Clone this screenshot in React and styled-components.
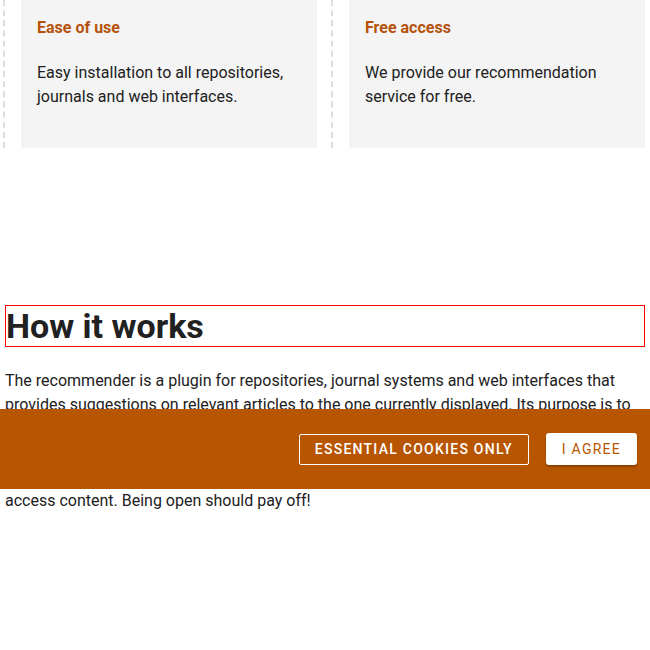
import React from "react";
import styled, { createGlobalStyle } from "styled-components";

const GlobalStyle = createGlobalStyle`
  html, body {
    margin: 0;
    padding: 0;
    background: #ffffff;
    overflow: hidden;
  }
  body {
    font-family: Roboto, "Noto Sans", sans-serif;
    color: #212121;
  }
`;

const features = [
  {
    title: "Ease of use",
    text: "Easy installation to all repositories, journals and web interfaces.",
  },
  {
    title: "Free access",
    text: "We provide our recommendation service for free.",
  },
];

const App = () => {
  return (
    <Page>
      <GlobalStyle />
      <FeatureRow>
        {features.map((f) => (
          <FeatureColumn key={f.title}>
            <Card>
              <CardTitle>{f.title}</CardTitle>
              <CardText>{f.text}</CardText>
            </Card>
          </FeatureColumn>
        ))}
      </FeatureRow>

      <Section>
        <Heading>How it works</Heading>
        <Paragraph>
          The recommender is a plugin for repositories, journal systems and web
          interfaces that provides suggestions on relevant articles to the one
          currently displayed. Its purpose is to support users in discovering
          articles of interest from across the network of open access
          repositories. It is intended to be particularly useful for enabling
          the discoverability of research outputs, and to reward institutions
          that make their work freely available as open access content. Being
          open should pay off!
        </Paragraph>
      </Section>

      <CookieBanner>
        <OutlineButton>Essential cookies only</OutlineButton>
        <SolidButton>I agree</SolidButton>
      </CookieBanner>
    </Page>
  );
};

export default App;

const Page = styled.div`
  width: 650px;
  height: 650px;
  overflow: hidden;
  position: relative;
`;

const FeatureRow = styled.div`
  display: flex;
  flex-wrap: nowrap;
  margin-left: 3px;
  height: 148px;
`;

const FeatureColumn = styled.div`
  flex: 0 0 auto;
  border-left: 2px dashed #dddddd;
  padding: 0 14px 0 16px;
  display: flex;
`;

const Card = styled.div`
  width: 296px;
  background-color: #f4f4f4;
  padding: 16px 16px 0 16px;
  box-sizing: border-box;
`;

const CardTitle = styled.h3`
  margin: 0;
  font-size: 16px;
  line-height: 24px;
  font-weight: 700;
  color: #b5520b;
`;

const CardText = styled.p`
  margin: 21px 0 0 0;
  font-size: 16px;
  line-height: 24px;
  color: #212121;
`;

const Section = styled.div`
  padding: 157px 5px 0 5px;
`;

const Heading = styled.h2`
  margin: 0;
  border: 1px solid #ff0000;
  font-size: 34px;
  line-height: 40px;
  font-weight: 700;
  color: #212121;
`;

const Paragraph = styled.p`
  margin: 22px 0 0 0;
  font-size: 16px;
  line-height: 24px;
`;

const CookieBanner = styled.div`
  position: absolute;
  top: 409px;
  left: 0;
  right: 0;
  height: 80px;
  background-color: #b85500;
  display: flex;
  align-items: center;
  justify-content: flex-end;
  gap: 17px;
  padding-right: 13px;
`;

const OutlineButton = styled.button`
  height: 31px;
  padding: 0 15px;
  background: transparent;
  border: 1px solid #ffffff;
  border-radius: 2px;
  color: #ffffff;
  font-family: Roboto, sans-serif;
  font-size: 14px;
  font-weight: 500;
  letter-spacing: 1.25px;
  text-transform: uppercase;
`;

const SolidButton = styled.button`
  height: 32px;
  padding: 0 16px;
  background: #ffffff;
  border: none;
  border-radius: 3px;
  box-shadow: 0 2px 2px rgba(0, 0, 0, 0.25);
  color: #b85500;
  font-family: Roboto, sans-serif;
  font-size: 14px;
  font-weight: 400;
  letter-spacing: 1.25px;
  text-transform: uppercase;
`;
